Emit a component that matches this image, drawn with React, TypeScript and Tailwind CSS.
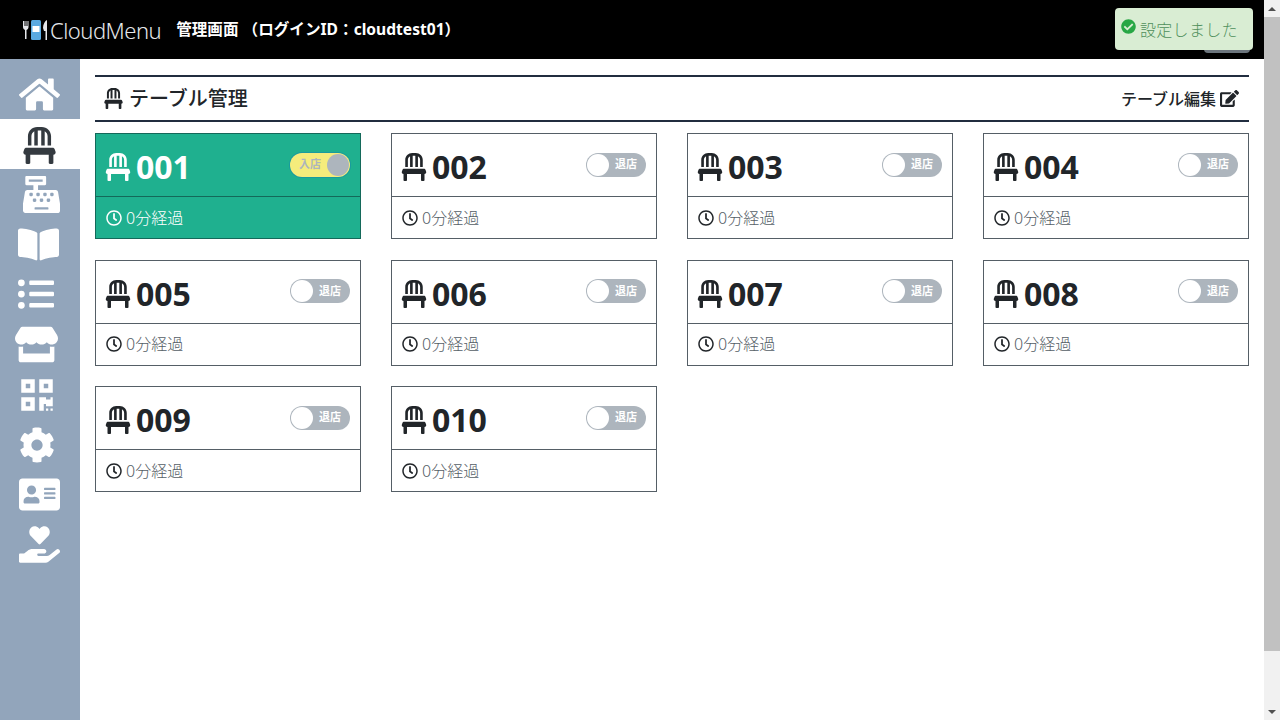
import { FaHome, FaChair, FaCashRegister, FaBookOpen, FaListUl, FaStore, FaQrcode, FaCog, FaAddressCard, FaHandHoldingHeart, FaEdit, FaRegClock, FaCheckCircle } from "react-icons/fa";

const font = "[font-family:'Noto_Sans','Noto_Sans_CJK_JP',sans-serif]";

const tables = ["001", "002", "003", "004", "005", "006", "007", "008", "009", "010"];

// sizes and nudges read off the screenshot, the icons are not uniform there
const nav = [
  { Icon: FaHome, cls: "text-[41px] -ml-[1px]" },
  { Icon: FaChair, cls: "text-[37px] -ml-[2px] mt-[2px]" },
  { Icon: FaCashRegister, cls: "text-[37px] ml-[3px]" },
  { Icon: FaBookOpen, cls: "text-[41px] -ml-[3px]" },
  { Icon: FaListUl, cls: "text-[36px] -ml-[8px]" },
  { Icon: FaStore, cls: "text-[43px] -ml-[7px]" },
  { Icon: FaQrcode, cls: "text-[36px] -ml-[6px] mt-[1px]" },
  { Icon: FaCog, cls: "text-[36px] -ml-[6px] mt-[1px]" },
  { Icon: FaAddressCard, cls: "text-[41px] -ml-[1px]" },
  { Icon: FaHandHoldingHeart, cls: "text-[41px] -ml-[1px] mt-[1px]" },
];

function Logo() {
  return (
    <svg width="28" height="24" viewBox="0 0 28 24" className="text-gray-200">
      <path d="M1 3v6c0 1.500 1 2.500 2 3v9h1.500v-9c1-.5 2-1.500 2-3V3H5.500v5H4.500V3h-1v5h-1V3z" fill="currentColor" />
      <rect x="9" y="2" width="10" height="20" rx="1.500" fill="#5aa9e0" />
      <rect x="10.500" y="8" width="7" height="6" fill="#fff" />
      <path d="M21 10c0-4 2-7 4-8v20h-1.500v-9H22z" fill="currentColor" />
    </svg>
  );
}

function Toggle({ active }: { active: boolean }) {
  if (active) {
    return (
      <div className="-mt-[1px] w-[60px] h-[24px] rounded-full bg-[#f5ec7c] flex items-center justify-between pl-[9px] pr-[1px] ring-1 ring-[#1a9aa0]">
        <span className="text-[11px] font-bold text-[#adb5bd]">入店</span>
        <span className="w-[22px] h-[22px] rounded-full bg-[#adb5bd]" />
      </div>
    );
  }
  return (
    <div className="-mt-[1px] w-[60px] h-[24px] rounded-full bg-[#adb5bd] flex items-center justify-between pl-[1px] pr-[9px]">
      <span className="w-[22px] h-[22px] rounded-full bg-white" />
      <span className="text-[11px] font-bold text-white">退店</span>
    </div>
  );
}

function Card({ no, active }: { no: string; active: boolean }) {
  return (
    <div className={active ? "h-[106px] border border-[#14695a] bg-[#1fb08f] text-white" : "h-[106px] border border-[#555e66] bg-white text-[#212529]"}>
      <div className={active ? "h-[63px] border-b border-[#14695a] flex items-center justify-between px-[10px]" : "h-[63px] border-b border-[#555e66] flex items-center justify-between px-[10px]"}>
        <div className="flex items-center gap-[4px] mt-[4px] -ml-[2px]">
          <FaChair className="text-[28px]" />
          <span className="text-[32px] font-bold leading-none">{no}</span>
        </div>
        <Toggle active={active} />
      </div>
      <div className="flex items-center gap-[4px] pl-[10px] h-[41px] text-[16px]">
        <FaRegClock className={active ? "text-[16px] text-white" : "text-[16px] text-[#212529]"} />
        <span className={active ? "font-light text-white" : "font-light text-[#555e66]"}>0分経過</span>
      </div>
    </div>
  );
}

export default function App() {
  return (
    <div className={`${font} relative w-[1280px] h-[720px] overflow-hidden flex bg-white`}>
      <div className="w-[1264px] flex flex-col">
        <header className="h-[59px] bg-black flex items-center pl-[22px] text-white shrink-0">
          <Logo />
          <span className="text-[22px] font-light tracking-[-0.5px] text-gray-200 leading-none">CloudMenu</span>
          <span className="ml-[15px] text-[15.6px] font-bold">管理画面 （ログインID：cloudtest01）</span>
          <div className="ml-auto mr-[14px] mt-[20px] w-[46px] h-[26px] rounded bg-[#6c757d]" />
        </header>
        <div className="flex flex-1">
          <aside className="w-[80px] bg-[#92a5bb] shrink-0 flex flex-col pt-[10px]">
            {nav.map(({ Icon, cls }, i) => (
              <div key={i} className={i === 1 ? "h-[50px] flex items-center justify-center bg-white text-[#343a40]" : "h-[50px] flex items-center justify-center text-white"}>
                <Icon className={cls} />
              </div>
            ))}
          </aside>
          <main className="flex-1 px-[15px] pt-[16px]">
            <div className="h-[47px] border-y-2 border-[#212d3f] flex items-center justify-between px-[10px] text-[#212529]">
              <div className="flex items-center gap-[5px] -ml-[2px]">
                <FaChair className="text-[21px]" />
                <span className="text-[20px] font-medium">テーブル管理</span>
              </div>
              <div className="flex items-center gap-[4px]">
                <span className="text-[16px] font-medium">テーブル編集</span>
                <FaEdit className="text-[19px]" />
              </div>
            </div>
            <div className="grid grid-cols-4 gap-x-[30px] gap-y-[20.5px] mt-[11px]">
              {tables.map((t, i) => (
                <Card key={t} no={t} active={i === 0} />
              ))}
            </div>
          </main>
        </div>
      </div>
      <div className="w-[16px] bg-[#f1f1f1] flex flex-col items-center shrink-0">
        <div className="h-[17px] flex items-center justify-center">
          <svg width="8" height="4" viewBox="0 0 8 4"><polygon points="4,0 8,4 0,4" fill="#505050" /></svg>
        </div>
        <div className="w-full h-[634px] bg-[#c1c1c1]" />
        <div className="mt-auto h-[17px] flex items-center justify-center">
          <svg width="8" height="4" viewBox="0 0 8 4"><polygon points="0,0 8,0 4,4" fill="#505050" /></svg>
        </div>
      </div>
      <div className="absolute left-[1115px] top-[8px] w-[138px] h-[42px] rounded bg-[#d9edd3] text-[#4f8f5b] flex items-center pl-[6px] gap-[4px]">
        <FaCheckCircle className="text-[15px] text-[#28a745] -mt-[6px]" />
        <span className="text-[16px] tracking-[0.3px] font-light mt-[2px]">設定しました</span>
      </div>
    </div>
  );
}
